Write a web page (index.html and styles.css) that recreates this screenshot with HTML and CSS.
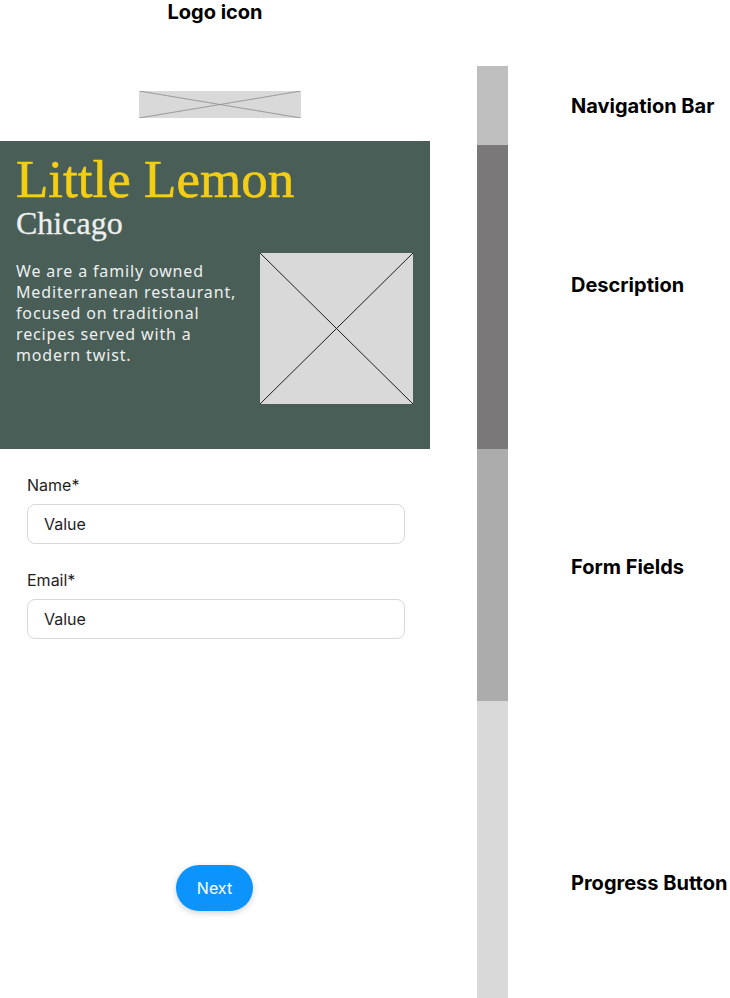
FILE: index.html
```html
<!DOCTYPE html>
<html lang="en">
<head>
<meta charset="utf-8">
<title>Little Lemon - Wireframe</title>
<link rel="stylesheet" href="styles.css">
</head>
<body>
<div class="page">
  <div class="screen">
    <div class="caption">Logo icon</div>
    <header class="nav">
      <svg class="logo" viewBox="0 0 162 27" preserveAspectRatio="none">
        <rect width="162" height="27" fill="#d9d9d9"/>
        <line x1="0" y1="0" x2="162" y2="27" stroke="#8a8a8a" stroke-width="0.8"/>
        <line x1="162" y1="0" x2="0" y2="27" stroke="#8a8a8a" stroke-width="0.8"/>
      </svg>
    </header>
    <section class="hero">
      <h1 class="title">Little Lemon</h1>
      <h2 class="city">Chicago</h2>
      <div class="hero-body">
        <p class="desc">We are a family owned Mediterranean restaurant, focused on traditional recipes served with a modern twist.</p>
        <svg class="hero-img" viewBox="0 0 153 151" preserveAspectRatio="none">
          <rect width="153" height="151" fill="#d9d9d9"/>
          <line x1="0" y1="0" x2="153" y2="151" stroke="#1e1e1e" stroke-width="1"/>
          <line x1="153" y1="0" x2="0" y2="151" stroke="#1e1e1e" stroke-width="1"/>
        </svg>
      </div>
    </section>
    <form class="form">
      <label class="field">
        <span class="label">Name*</span>
        <span class="input">Value</span>
      </label>
      <label class="field">
        <span class="label">Email*</span>
        <span class="input">Value</span>
      </label>
    </form>
    <div class="actions">
      <button class="next" type="button">Next</button>
    </div>
  </div>
  <div class="bars">
    <div class="seg seg-nav"></div>
    <div class="seg seg-desc"></div>
    <div class="seg seg-form"></div>
    <div class="seg seg-btn"></div>
  </div>
  <div class="notes">
    <div class="note note-nav">Navigation Bar</div>
    <div class="note note-desc">Description</div>
    <div class="note note-form">Form Fields</div>
    <div class="note note-btn">Progress Button</div>
  </div>
</div>
</body>
</html>
```
FILE: styles.css
```css
html, body {
  margin: 0;
  padding: 0;
  background: #ffffff;
}
body {
  font-family: "Inter", "Liberation Sans", sans-serif;
  width: 730px;
  height: 998px;
  overflow: hidden;
}
.page {
  display: flex;
  align-items: flex-start;
}
.screen {
  width: 430px;
  flex: none;
  display: flex;
  flex-direction: column;
}
.caption {
  height: 66px;
  text-align: center;
  font-weight: 700;
  font-size: 20px;
  line-height: 24px;
  color: #000;
}
.nav {
  height: 75px;
  padding-top: 25px;
  padding-left: 139px;
  box-sizing: border-box;
}
.logo {
  display: block;
  width: 162px;
  height: 27px;
}
.hero {
  height: 308px;
  background: #495e57;
  padding: 10px 17px 0 16px;
  box-sizing: border-box;
}
.title {
  margin: 0;
  font-family: "Liberation Serif", serif;
  font-weight: 400;
  font-size: 53px;
  line-height: 56px;
  color: #f4ce14;
  -webkit-text-stroke: 0.6px #f4ce14;
}
.city {
  margin: 0;
  font-family: "Liberation Serif", serif;
  font-weight: 400;
  font-size: 32px;
  line-height: 32px;
  color: #edefee;
  -webkit-text-stroke: 0.3px #edefee;
}
.hero-body {
  display: flex;
  justify-content: space-between;
  align-items: flex-start;
  margin-top: 14px;
}
.desc {
  margin: 8px 0 0;
  width: 232px;
  font-family: "Noto Sans", sans-serif;
  font-size: 16px;
  line-height: 21px;
  letter-spacing: 0.85px;
  color: #edefee;
}
.hero-img {
  display: block;
  width: 153px;
  height: 151px;
}
.form {
  display: flex;
  flex-direction: column;
  gap: 25px;
  padding: 25px 25px 0 27px;
}
.field {
  display: flex;
  flex-direction: column;
  gap: 8px;
}
.label {
  font-size: 16px;
  line-height: 22px;
  color: #1e1e1e;
}
.input {
  height: 40px;
  box-sizing: border-box;
  border: 1px solid #d9d9d9;
  border-radius: 8px;
  padding: 0 16px;
  display: flex;
  align-items: center;
  font-size: 16px;
  color: #1e1e1e;
}
.actions {
  display: flex;
  padding-top: 226px;
  padding-left: 176px;
}
.next {
  width: 77px;
  height: 46px;
  border: none;
  border-radius: 23px;
  background: #0d93fc;
  color: #ffffff;
  font-family: "Inter", sans-serif;
  font-size: 16px;
  box-shadow: 0 2px 6px rgba(0, 0, 0, 0.18);
}
.bars {
  margin-left: 47px;
  width: 31px;
  flex: none;
  padding-top: 66px;
  display: flex;
  flex-direction: column;
}
.seg-nav { height: 79px; background: #bfbfbf; }
.seg-desc { height: 304px; background: #7a7878; }
.seg-form { height: 252px; background: #adacac; }
.seg-btn { height: 297px; background: #d9d9d9; }
.notes {
  margin-left: 63px;
  display: flex;
  flex-direction: column;
  font-weight: 700;
  font-size: 20px;
  line-height: 24px;
  color: #000;
  white-space: nowrap;
}
.note-nav { margin-top: 94px; }
.note-desc { margin-top: 155px; }
.note-form { margin-top: 258px; }
.note-btn { margin-top: 292px; }
```
